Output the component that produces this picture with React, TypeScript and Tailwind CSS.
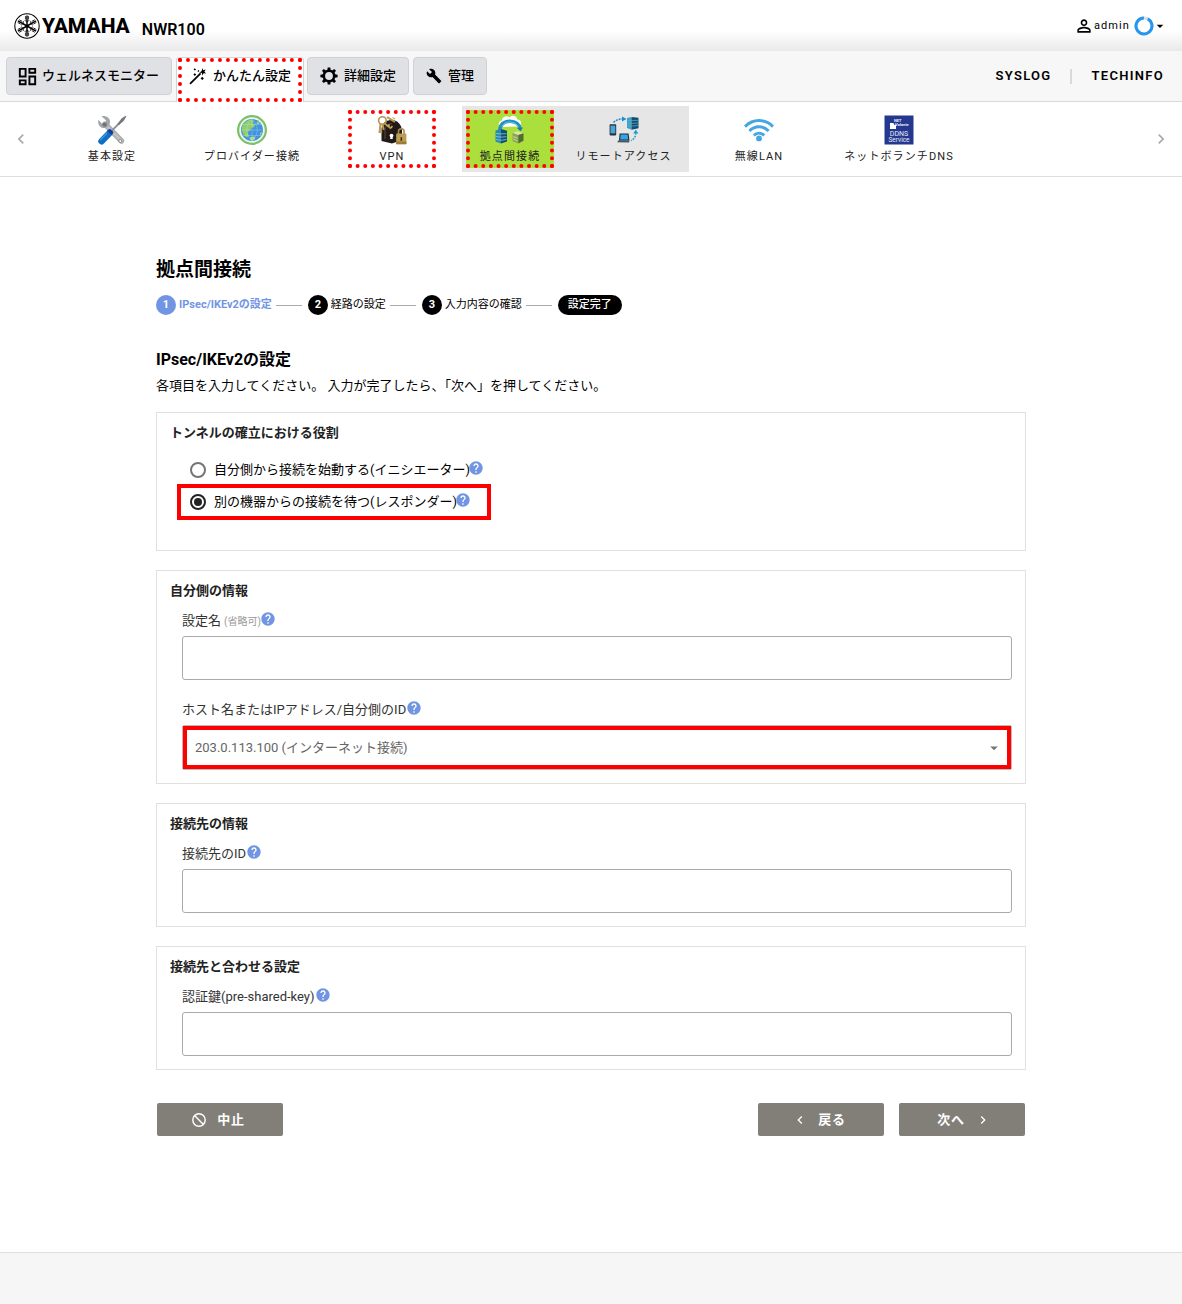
import { useState } from "react";
import type { ReactNode } from "react";
import {
  MdArrowDropDown,
  MdBuild,
  MdChevronLeft,
  MdChevronRight,
  MdHelp,
  MdOutlineDashboard,
  MdPersonOutline,
} from "react-icons/md";

function Emblem() {
  return (
    <svg viewBox="0 0 50 50" className="size-[26px] shrink-0" aria-hidden="true">
      <circle cx="25" cy="25" r="23.4" fill="none" stroke="#000" strokeWidth="2" />
      {[0, 60, 120, 180, 240, 300].map((a) => (
        <g key={a} transform={`rotate(${a} 25 25)`} fill="none" stroke="#000">
          <path d="M25 25V5" strokeWidth="2.8" />
          <path d="M22 6v6.500M28 6v6.500" strokeWidth="1.500" />
          <path d="M20.500 14.500q4.500 3 9 0" strokeWidth="1.500" />
        </g>
      ))}
      <circle cx="25" cy="25" r="3" />
    </svg>
  );
}

function WandIcon() {
  return (
    <svg viewBox="0 0 18 18" className="size-[18px]" aria-hidden="true">
      <path d="M1 16.8 11.6 6.4" stroke="#000" strokeWidth="1.8" />
      <path d="m13.6 1 .6 2.3 2.6-.9-1.4 2.2 1.6 1.8-2.4-.2-1.3 2.2-.4-2.5-2.6-.5 2.2-1.1z" />
      <path d="m5.800 1.200 1.200 1.200-1.200 1.200-1.200-1.200zM5.800 6.200l1.400 1.400-1.400 1.400-1.400-1.400zM13.200 9.800l1.700 1.600-1.700 1.700-1.600-1.700zM9.400 3l1 1-1 1-1-1z" />
    </svg>
  );
}

function GearIcon() {
  return (
    <svg viewBox="0 0 18 18" className="size-[18px]" aria-hidden="true">
      <circle cx="9" cy="9" r="5.200" fill="none" stroke="#000" strokeWidth="2.600" />
      {[0, 45, 90, 135, 180, 225, 270, 315].map((a) => (
        <path key={a} d="M7.300 3.400 7.700.4h2.600l.4 3z" transform={`rotate(${a} 9 9)`} />
      ))}
    </svg>
  );
}

function CancelIcon() {
  return (
    <svg viewBox="0 0 16 16" className="size-4" aria-hidden="true" fill="none" stroke="currentColor" strokeWidth="1.4">
      <circle cx="8" cy="8" r="6.200" />
      <path d="m3.600 3.600 8.800 8.800" />
    </svg>
  );
}

function ToolsIcon() {
  return (
    <svg viewBox="0 0 30 30" className="size-[30px]" aria-hidden="true">
      <path d="M8 9 24.5 26" stroke="#aaa" strokeWidth="5.4" strokeLinecap="round" />
      <path d="M8 9 24.5 26" stroke="#bfc1c4" strokeWidth="3" strokeLinecap="round" />
      <path d="M4.6 1.5 9 5.2 8.6 8.6 5.2 9 1.4 4.8C.4 9 2.6 12.6 6 13c3.6.4 7.4-2.6 7-6.8C12.6 2.400 8 0 4.600 1.500z" fill="#a2a5a9" />
      <circle cx="7.600" cy="9.600" r="2.200" fill="#6f7276" />
      <circle cx="23.200" cy="26" r="1.500" fill="#fff" stroke="#777" strokeWidth=".8" />
      <path d="M13.500 17 22 8.500" stroke="#8f9297" strokeWidth="1.800" />
      <path d="m20.500 8.800 4-5.400L28.500.8l.8.8-2.500 4.200-5 4.400z" fill="#74787d" />
      <path d="m4.600 26.200 7-7.200" stroke="#0f6fc6" strokeWidth="6.600" strokeLinecap="round" />
      <path d="m10 15.500 4.800 4.800 1.800-3-3.600-3.600z" fill="#123f9c" />
      <path d="m3.600 24.800 6-6.200" stroke="#3d95e0" strokeWidth="1.400" strokeLinecap="round" />
    </svg>
  );
}

function GlobeIcon() {
  return (
    <svg viewBox="0 0 30 30" className="size-[30px]" aria-hidden="true">
      <circle cx="15" cy="15" r="13.900" fill="#eef4ee" stroke="#7cc067" strokeWidth="2.200" />
      <circle cx="15" cy="15" r="11" fill="#3f94dc" />
      <path d="M5 11.500C6.500 7.500 10 5 14 4.400l2.600 1.400-.6 2.600 2.200 1-1 2.800-3 .6-1 2.600-2.600 1.600 1 3-1 2.400-2.600-1.200C5.600 18.800 4.200 15 5 11.500z" fill="#8fcf6a" />
      <path d="m13 22.200 4-1 1.400 2-2.400 2.500-2.800-.6zM20 6.200l2.600 2-1 1.200-2-1zM23 18l1.400-1 .4 1.600-1.600 2z" fill="#a7dc7c" />
      <path d="M15 4.200v21.600M4.200 15h21.600M15 4.200c-7 6-7 15.600 0 21.600M15 4.200c7 6 7 15.600 0 21.600M6 9.500h18M6 20.500h18" fill="none" stroke="#cfe6fa" strokeWidth=".5" opacity=".6" />
    </svg>
  );
}

function VpnIcon() {
  return (
    <svg viewBox="0 0 30 30" className="size-[30px]" aria-hidden="true">
      <path d="M4.500 26V15C4.500 8 9.500 4.500 15 5c6 .5 9.800 5 10 11v9l-10 3.500z" fill="#231a18" />
      <path d="M8 24V15.500C8 11 11 8.500 15 8.800" fill="none" stroke="#5a4640" strokeWidth="1" />
      <circle cx="14.500" cy="20.600" r="1.900" fill="#fff" />
      <path d="M13.700 21h1.600l.6 3h-2.800z" fill="#fff" />
      <circle cx="5.400" cy="5.600" r="3.800" fill="none" stroke="#b09455" strokeWidth="1.600" />
      <path d="m7 8 7 5.500M3.500 8.500 2.600 17h2.600M10 2.200l8 4.600M5.500 9l1.200 6" stroke="#b8994f" strokeWidth="2" fill="none" />
      <path d="m14 13 1.400-2M11 11.500l1.500-2M15.500 2.500 18 4" stroke="#d0b36b" strokeWidth="1.400" />
      <path d="M21.500 19v-2.400a2.800 2.800 0 0 1 5.600 0V19" fill="none" stroke="#a98d52" strokeWidth="1.600" />
      <rect x="19.200" y="18.600" width="10.200" height="10.600" rx=".8" fill="#bd9c54" />
      <path d="M19.200 26.500h10.200v2.700H19.200z" fill="#9c7c39" />
      <path d="M24.300 22.200v3.600" stroke="#3d2f17" strokeWidth="1.600" />
    </svg>
  );
}

function SiteIcon() {
  return (
    <svg viewBox="0 0 30 30" className="size-[30px]" aria-hidden="true">
      <path d="M7 12C2.500 11.500 3 5.500 7 5.600 7 1.400 12 0 14.600 2.400 17-.6 22 .8 22.400 4.600c4.600 0 5 6.400.8 7z" fill="#fff" />
      <path d="M4.800 16C5 9.500 9 6.200 14.800 6.200S24.500 9.500 25.200 14" fill="none" stroke="#1f8fc4" strokeWidth="3.600" />
      <path d="M6.500 12C8.500 8.500 11 7 15 7s7 2 8.400 5" fill="none" stroke="#5cc4e8" strokeWidth="1" />
      <path d="m22 13 6-.6-2.400 3.800z" fill="#1479ae" />
      <path d="m.5 15.500 5.500-1.600v14.600L.5 26.500z" fill="#2d89ad" />
      <path d="m6 13.900 6 1.800v10.800l-6 2z" fill="#124e70" />
      <path d="M1 18.500l5 .4 5.500-.2M1 21.500l5 .6 5.500-.4M1 24.500l5 .8 5.500-.8" fill="none" stroke="#80cbe0" strokeWidth=".8" />
      <path d="m17.500 18 5-1.800 6 2-5.200 1.800z" fill="#dce7a4" />
      <path d="m17.500 18 5.800 2v8.600l-5.800-2.600z" fill="#8da35d" />
      <path d="m23.300 20 5.200-1.800v7.600l-5.200 2.800z" fill="#526a34" />
      <path d="m18.300 21.600 4.200 1.600M18.300 24l4.200 1.800" stroke="#dce7a4" strokeWidth=".8" />
    </svg>
  );
}

function RemoteIcon() {
  return (
    <svg viewBox="0 0 30 30" className="size-[30px]" aria-hidden="true">
      <path d="m18 3 4.500-1v12.800L18 13z" fill="#3ba3c7" />
      <path d="m22.500 2 7 .8v10.400l-7 1.600z" fill="#134d70" />
      <path d="M18.500 5.500l4 .2 6.500-.4M18.500 8l4 .4 6.500-.4M18.500 10.500l4 .6 6.500-.6" fill="none" stroke="#58b4d4" strokeWidth=".7" />
      <rect x=".6" y="9.200" width="6.600" height="11.200" rx=".8" fill="#26323b" />
      <path d="M1.500 10.600h4.800v7.800H1.500z" fill="#46a5dd" />
      <path d="M10.600 18.600h9l.8 7H10z" fill="#1d2c3b" />
      <path d="M11.600 19.600h7l.6 5h-8z" fill="#35a4e4" />
      <path d="m9.600 25.200 11.200.2-1 2.200-11.600-.4z" fill="#3f5564" />
      <path d="M4.500 7.400C7.500 4.400 10.500 4 14 4" fill="none" stroke="#178bd0" strokeWidth="1.500" strokeDasharray="2 1" />
      <path d="M13 1.600 17.500 4 13 6.600z" fill="#178bd0" />
      <path d="M26.800 17.500c0 4-1.600 6.500-4.800 8" fill="none" stroke="#24a2c4" strokeWidth="1.500" strokeDasharray="2 1" />
      <path d="m24.200 18.500 2.600-4 2.600 4z" fill="#24a2c4" />
    </svg>
  );
}

function WifiIcon() {
  return (
    <svg viewBox="0 0 30 30" className="size-[30px]" aria-hidden="true">
      <g fill="none" stroke="#46a6e2" strokeWidth="3">
        <path d="M1 11.600C9 3.600 21 3.600 29 11.600" />
        <path d="M5.400 16c5.600-5.600 13.600-5.600 19.200 0" />
        <path d="M9.800 20.400c3.200-3 7.200-3 10.400 0" />
      </g>
      <circle cx="15" cy="23.400" r="2.900" fill="#46a6e2" />
    </svg>
  );
}

function DdnsIcon() {
  return (
    <svg viewBox="0 0 30 30" className="size-[30px]" aria-hidden="true">
      <rect x=".5" y=".5" width="29" height="29" fill="#24388f" />
      <path d="M6 8h3.400l1 2 1.600-.6V14H6z" fill="#fff" />
      <g fontFamily="Roboto" fill="#e9ecf8">
        <text x="10" y="6.600" fontSize="4" fontWeight="700">NET</text>
        <text x="11" y="10.600" fontSize="4" fontWeight="700">Volante</text>
        <text x="15" y="21.200" fontSize="7" textAnchor="middle">DDNS</text>
        <text x="15" y="27" fontSize="6.500" textAnchor="middle">Service</text>
      </g>
    </svg>
  );
}

const tabs = [
  { label: "ウェルネスモニター", icon: <MdOutlineDashboard className="-mx-[3px] size-[23px]" /> },
  { label: "かんたん設定", icon: <WandIcon />, active: true },
  { label: "詳細設定", icon: <GearIcon /> },
  { label: "管理", icon: <MdBuild className="size-4" /> },
];

function NavItem({ icon, label }: { icon: ReactNode; label: string }) {
  return (
    <a href="#" className="flex flex-col items-center gap-1 pt-px">
      {icon}
      <span className="text-[11px] leading-4 tracking-widest whitespace-nowrap text-[#222]">{label}</span>
    </a>
  );
}

function Help({ className = "" }: { className?: string }) {
  return (
    <button type="button" aria-label="ヘルプ" className={`mb-1 ${className}`}>
      <MdHelp className="size-4 text-[#7195e3]" />
    </button>
  );
}

function Section({ title, children }: { title: string; children: ReactNode }) {
  return (
    <section className="border border-[#e0e0e0] px-[13px] pt-[10px] pb-[13px]">
      <h3 className="text-[13px] leading-5 font-bold text-[#222]">{title}</h3>
      {children}
    </section>
  );
}

function Label({ id, text, note }: { id: string; text: string; note?: string }) {
  return (
    <div className="mb-[5px] flex h-5 items-center">
      <label htmlFor={id} className="text-[13px] leading-5 text-[#333]">
        {text}
        {note && <span className="ml-[3px] text-[10px] text-[#999]">{note}</span>}
      </label>
      <Help className={note ? "-ml-px" : ""} />
    </div>
  );
}

function TextField({ id }: { id: string }) {
  return (
    <input
      id={id}
      type="text"
      className="block h-11 w-full rounded-[3px] border border-[#aaa] bg-white px-3 text-[13px] outline-none focus:border-[#7195e3]"
    />
  );
}

const steps = [
  { n: 1, label: "IPsec/IKEv2の設定", active: true },
  { n: 2, label: "経路の設定" },
  { n: 3, label: "入力内容の確認" },
];

const roles = [
  { id: "initiator", label: "自分側から接続を始動する(イニシエーター)" },
  { id: "responder", label: "別の機器からの接続を待つ(レスポンダー)" },
];

const actionClass =
  "flex h-[33px] w-[126px] items-center justify-center gap-[10px] rounded-[2px] bg-[#827f79] text-[13px] leading-5 font-bold tracking-wider text-white";

export default function App() {
  const [role, setRole] = useState("responder");
  return (
    <div
      lang="ja"
      className="flex min-h-screen flex-col bg-white font-['Roboto','Noto_Sans_CJK_JP',sans-serif] text-black"
    >
      <header className="flex h-[51px] items-center justify-between bg-linear-to-b from-white from-60% to-[#e9e9e9] pr-[14px] pl-[14px]">
        <div className="flex items-center">
          <Emblem />
          <span className="ml-[2px] text-[21px] leading-[26px] font-extrabold">YAMAHA</span>
          <span className="mt-2 ml-3 text-base leading-5 font-semibold">NWR100</span>
        </div>
        <button type="button" className="flex items-center">
          <MdPersonOutline className="size-5" />
          <span className="text-[11px] leading-5 tracking-widest">admin</span>
          <svg viewBox="0 0 20 20" className="ml-1 size-5" aria-hidden="true">
            <circle cx="10" cy="10" r="8" fill="none" stroke="#ddd" strokeWidth="3" />
            <circle cx="10" cy="10" r="8" fill="none" stroke="#2196f3" strokeWidth="3" pathLength="100" strokeDasharray="92 8" transform="rotate(-62 10 10)" />
          </svg>
          <MdArrowDropDown className="-ml-[2px] size-4" />
        </button>
      </header>

      <div className="flex h-[51px] justify-between border-b border-[#d9d9d9] bg-[#f7f7f7] pr-[18px] pl-[6px]">
        <nav className="flex items-start gap-1 pt-[6px]">
          {tabs.map((t) =>
            t.active ? (
              <a
                key={t.label}
                href="#"
                aria-current="page"
                className="relative -mr-px flex h-[45px] items-center gap-[6px] rounded-t border border-b-0 border-[#d4d4d4] bg-white px-3 pb-2 text-[13px] font-medium"
              >
                {t.icon}
                {t.label}
                <span className="absolute inset-x-px top-0 bottom-0 border-4 border-dotted border-[#f00]" />
              </a>
            ) : (
              <a
                key={t.label}
                href="#"
                className="flex h-[38px] items-center gap-[6px] rounded border border-[#d0d1d4] bg-[#e0e1e5] px-3 text-[13px] font-medium"
              >
                {t.icon}
                {t.label}
              </a>
            ),
          )}
        </nav>
        <div className="flex items-center text-[13px] leading-5 font-semibold tracking-widest">
          <a href="#">SYSLOG</a>
          <span className="mr-5 ml-[18px] h-[15px] w-[2px] bg-[#d9d9d9]" />
          <a href="#">TECHINFO</a>
        </div>
      </div>

      <nav className="flex h-[75px] items-center justify-between border-b border-[#dedede]">
        <button type="button" aria-label="前へ" className="flex w-[42px] shrink-0 justify-center text-[#aaa]">
          <MdChevronLeft className="size-5" />
        </button>
        <div className="flex h-full flex-1 items-center">
          <div className="flex w-[140px] justify-center">
            <NavItem icon={<ToolsIcon />} label="基本設定" />
          </div>
          <div className="flex w-[140px] justify-center">
            <NavItem icon={<GlobeIcon />} label="プロバイダー接続" />
          </div>
          <div className="flex w-[140px] justify-center">
            <div className="h-[58px] w-[88px] border-4 border-dotted border-[#f00]">
              <NavItem icon={<VpnIcon />} label="VPN" />
            </div>
          </div>
          <div className="flex h-[66px] items-center gap-1 bg-[#e6e6e6] pl-1">
            <div className="h-[58px] w-[88px] border-4 border-dotted border-[#f00] bg-[#aadf3c]">
              <NavItem icon={<SiteIcon />} label="拠点間接続" />
            </div>
            <div className="flex w-[131px] justify-center">
              <NavItem icon={<RemoteIcon />} label="リモートアクセス" />
            </div>
          </div>
          <div className="flex w-[140px] justify-center">
            <NavItem icon={<WifiIcon />} label="無線LAN" />
          </div>
          <div className="flex w-[140px] justify-center">
            <NavItem icon={<DdnsIcon />} label="ネットボランチDNS" />
          </div>
        </div>
        <button type="button" aria-label="次へ" className="flex w-[42px] shrink-0 justify-center text-[#aaa]">
          <MdChevronRight className="size-5" />
        </button>
      </nav>

      <main className="mx-auto w-full max-w-[870px] flex-1 pt-[79px] pb-10">
        <h1 className="text-[19px] leading-7 font-bold">拠点間接続</h1>
        <ol className="mt-[11px] flex h-5 items-center text-[11px] leading-5">
          {steps.map((s) => (
            <li key={s.n} className={`flex items-center ${s.active ? "font-bold text-[#7195e3]" : ""}`}>
              <span
                className={`flex size-5 items-center justify-center rounded-full font-bold text-white ${s.active ? "bg-[#7195e3]" : "bg-black"}`}
              >
                {s.n}
              </span>
              <span className="ml-[3px]">{s.label}</span>
              <span className="mr-[6px] ml-1 h-px w-[26px] bg-[#aaa]" />
            </li>
          ))}
          <li className="flex h-5 items-center rounded-full bg-black px-[10px] font-medium text-white">設定完了</li>
        </ol>

        <h2 className="mt-[33px] text-base leading-6 font-bold">IPsec/IKEv2の設定</h2>
        <p className="mt-1 text-[13px] leading-5">
          各項目を入力してください。 入力が完了したら、「次へ」を押してください。
        </p>

        <form className="mt-4 flex flex-col gap-[19px]" onSubmit={(e) => e.preventDefault()}>
          <Section title="トンネルの確立における役割">
            <div className="mt-[11px] mb-[19px] pl-5">
              {roles.map((r) => (
                <div key={r.id} className="relative flex h-8 items-center">
                  <input
                    id={r.id}
                    type="radio"
                    name="role"
                    checked={role === r.id}
                    onChange={() => setRole(r.id)}
                    className="size-4 appearance-none rounded-full border-2 border-[#757575] bg-clip-content p-[2px] checked:border-[#222] checked:bg-[#222]"
                  />
                  <label htmlFor={r.id} className="ml-2 text-[13px] leading-5">
                    {r.label}
                  </label>
                  <Help className="-ml-[2px]" />
                  {r.id === "responder" && (
                    <span className="pointer-events-none absolute -inset-y-[2px] -left-[13px] w-[314px] border-4 border-[#f00]" />
                  )}
                </div>
              ))}
            </div>
          </Section>

          <Section title="自分側の情報">
            <div className="mt-[10px] pl-3">
              <Label id="name" text="設定名" note="(省略可)" />
              <TextField id="name" />
            </div>
            <div className="mt-5 pl-3">
              <Label id="host" text="ホスト名またはIPアドレス/自分側のID" />
              <div className="relative flex h-[45px] items-center rounded-[2px] border border-[#bbb]">
                <select
                  id="host"
                  className="size-full appearance-none border-4 border-[#f00] bg-white px-2 text-[13px] text-[#666] outline-none"
                >
                  <option>203.0.113.100 (インターネット接続)</option>
                </select>
                <MdArrowDropDown className="pointer-events-none absolute right-2 size-[18px] text-[#757575]" />
              </div>
            </div>
          </Section>

          <Section title="接続先の情報">
            <div className="mt-[10px] pl-3">
              <Label id="peer" text="接続先のID" />
              <TextField id="peer" />
            </div>
          </Section>

          <Section title="接続先と合わせる設定">
            <div className="mt-[10px] pl-3">
              <Label id="key" text="認証鍵(pre-shared-key)" />
              <TextField id="key" />
            </div>
          </Section>
        </form>

        <div className="mt-[33px] flex justify-between px-px">
          <button type="button" className={`pr-1 ${actionClass}`}>
            <CancelIcon />
            中止
          </button>
          <div className="flex gap-[15px]">
            <button type="button" className={`pr-1 ${actionClass}`}>
              <MdChevronLeft className="size-4" />
              戻る
            </button>
            <button type="button" className={`pl-1 ${actionClass}`}>
              次へ
              <MdChevronRight className="size-4" />
            </button>
          </div>
        </div>
      </main>

      <footer className="h-[52px] border-t border-[#dedede] bg-[#f6f6f6]" />
    </div>
  );
}
